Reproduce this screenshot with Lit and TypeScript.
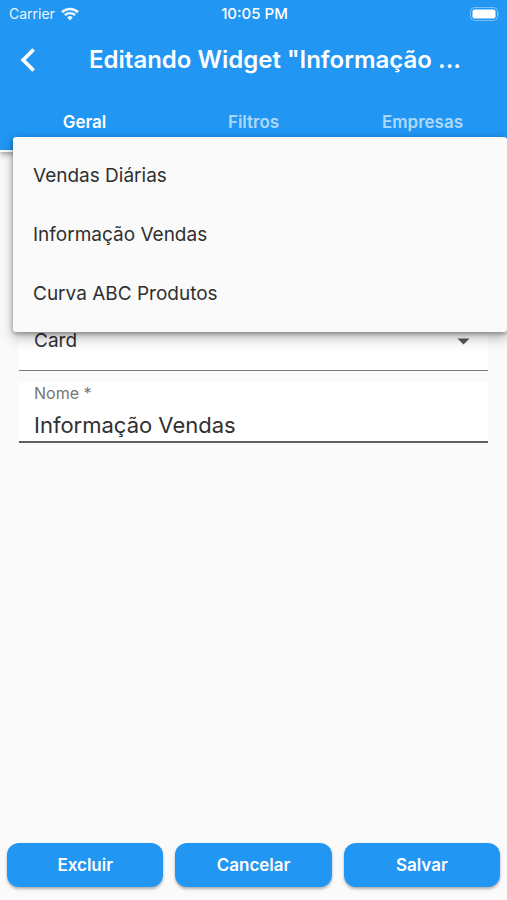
import { LitElement, html, css, svg } from "lit";
import { customElement, state } from "lit/decorators.js";
import { classMap } from "lit/directives/class-map.js";

const wifiIcon = svg`
  <path d="M1 5.2 A11.5 11.5 0 0 1 17 5.2" stroke-width="2.6" />
  <path d="M3.8 8.2 A7.6 7.6 0 0 1 14.2 8.2" stroke-width="2.4" />
  <path d="M6.2 10.4 A4 4 0 0 1 11.8 10.4 L9 13.4 Z" fill="#fff" stroke="none" />`;

@customElement("app-root")
export class AppRoot extends LitElement {
  @state() private tab = "Geral";
  @state() private menuOpen = true;

  private tabs = ["Geral", "Filtros", "Empresas"];
  private options = ["Vendas Diárias", "Informação Vendas", "Curva ABC Produtos"];
  private actions = ["Excluir", "Cancelar", "Salvar"];

  static styles = css`
    :host {
      display: flex;
      flex-direction: column;
      min-height: 100vh;
      background: #fafafa;
      color: #303030;
      font-family: Inter, "Liberation Sans", sans-serif;
    }
    * {
      box-sizing: border-box;
    }
    button,
    input,
    select {
      font: inherit;
      color: inherit;
      border: 0;
      border-radius: 0;
      background: none;
      margin: 0;
      padding: 0;
      outline: none;
    }
    header {
      background: #2196f3;
      color: #fff;
      box-shadow: 0 2px 6px rgba(0, 0, 0, 0.4);
    }
    .status {
      display: grid;
      grid-template-columns: 1fr auto 1fr;
      align-items: center;
      height: 27px;
      padding: 0 7px 0 9px;
      font-size: 14px;
    }
    .carrier {
      display: flex;
      align-items: center;
      gap: 6px;
      opacity: 0.92;
    }
    .time {
      font-size: 15px;
      font-weight: 500;
    }
    .battery {
      justify-self: end;
    }
    .bar {
      display: flex;
      align-items: center;
      height: 65px;
      padding: 0 40px 0 20px;
      gap: 53px;
    }
    .back {
      display: flex;
      width: 16px;
      flex: none;
    }
    h1 {
      margin: 0;
      font-size: 24px;
      line-height: 32px;
      font-weight: 600;
      white-space: nowrap;
    }
    .tabs {
      display: grid;
      grid-template-columns: repeat(3, 1fr);
    }
    .tab {
      height: 60px;
      padding-top: 2px;
      border-bottom: 2px solid transparent;
      color: rgba(255, 255, 255, 0.65);
      font-size: 17px;
      font-weight: 600;
    }
    .tab.active {
      color: #fff;
      border-bottom-color: #fff;
    }
    main {
      position: relative;
      flex: 1;
      display: flex;
      flex-direction: column;
      gap: 11px;
      padding: 159px 19px 0;
    }
    .field {
      display: flex;
      flex-direction: column;
      justify-content: center;
      position: relative;
      height: 60px;
      background: #fff;
      border-bottom: 1px solid #7a7a7a;
    }
    .field.text {
      height: 61px;
      border-bottom: 2px solid #606060;
      justify-content: flex-start;
    }
    .field select {
      appearance: none;
      width: 100%;
      height: 58px;
      padding: 0 40px 0 15px;
      font-size: 19px;
    }
    .arrow {
      position: absolute;
      right: 18px;
      top: 27px;
      pointer-events: none;
    }
    .field label {
      padding: 1px 15px 0;
      font-size: 16px;
      line-height: 20px;
      color: #757575;
    }
    .field input {
      width: 100%;
      height: 38px;
      padding: 5px 15px 0;
      font-size: 22px;
    }
    .menu {
      position: absolute;
      z-index: 2;
      top: -15px;
      left: 13px;
      right: 0;
      display: flex;
      flex-direction: column;
      padding: 9px 0;
      border-radius: 3px;
      background: #fafafa;
      box-shadow: 0 6px 14px rgba(0, 0, 0, 0.26), 0 2px 5px rgba(0, 0, 0, 0.34);
    }
    .menu button {
      height: 59px;
      padding: 0 20px;
      text-align: left;
      font-size: 19px;
    }
    footer {
      display: grid;
      grid-template-columns: repeat(3, 1fr);
      gap: 12px;
      padding: 0 7px 13px;
    }
    .action {
      height: 44px;
      border-radius: 12px;
      background: #2196f3;
      color: #fff;
      font-size: 17px;
      font-weight: 600;
      box-shadow: 0 2px 3px rgba(0, 0, 0, 0.3);
    }
  `;

  render() {
    return html`
      <header>
        <div class="status">
          <span class="carrier">
            Carrier
            <svg width="18" height="14" viewBox="0 0 18 14" fill="none" stroke="#fff">${wifiIcon}</svg>
          </span>
          <span class="time">10:05 PM</span>
          <svg class="battery" width="30" height="14" viewBox="0 0 30 14">
            <rect x="0.5" y="0.5" width="27" height="13" rx="4" fill="none" stroke="#fff" stroke-opacity="0.4" />
            <rect x="2.5" y="2.5" width="23" height="9" rx="2" fill="#fff" />
            <path d="M28.5 5 Q30 7 28.5 9 Z" fill="#fff" fill-opacity="0.5" />
          </svg>
        </div>
        <div class="bar">
          <button class="back" aria-label="Voltar">
            <svg width="16" height="24" viewBox="0 0 16 24" fill="none" stroke="#fff" stroke-width="3.8">
              <path d="M13.6 1.5 L3.2 12 L13.6 22.5" />
            </svg>
          </button>
          <h1>Editando Widget "Informação ...</h1>
        </div>
        <div class="tabs" role="tablist">
          ${this.tabs.map(
            (t) => html`<button
              role="tab"
              aria-selected=${t === this.tab}
              class=${classMap({ tab: true, active: t === this.tab })}
              @click=${() => (this.tab = t)}
            >${t}</button>`
          )}
        </div>
      </header>
      <main>
        ${this.menuOpen
          ? html`<div class="menu" role="menu">
              ${this.options.map(
                (o) => html`<button role="menuitem" @click=${() => (this.menuOpen = false)}>${o}</button>`
              )}
            </div>`
          : null}
        <div class="field">
          <select aria-label="Tipo">
            <option>Card</option>
          </select>
          <svg class="arrow" width="13" height="7" viewBox="0 0 13 7"><path d="M0.5 0.5 H12.5 L6.5 6.5 Z" fill="#555" /></svg>
        </div>
        <div class="field text">
          <label for="nome">Nome *</label>
          <input id="nome" type="text" .value=${"Informação Vendas"} />
        </div>
      </main>
      <footer>${this.actions.map((a) => html`<button class="action">${a}</button>`)}</footer>
    `;
  }
}
